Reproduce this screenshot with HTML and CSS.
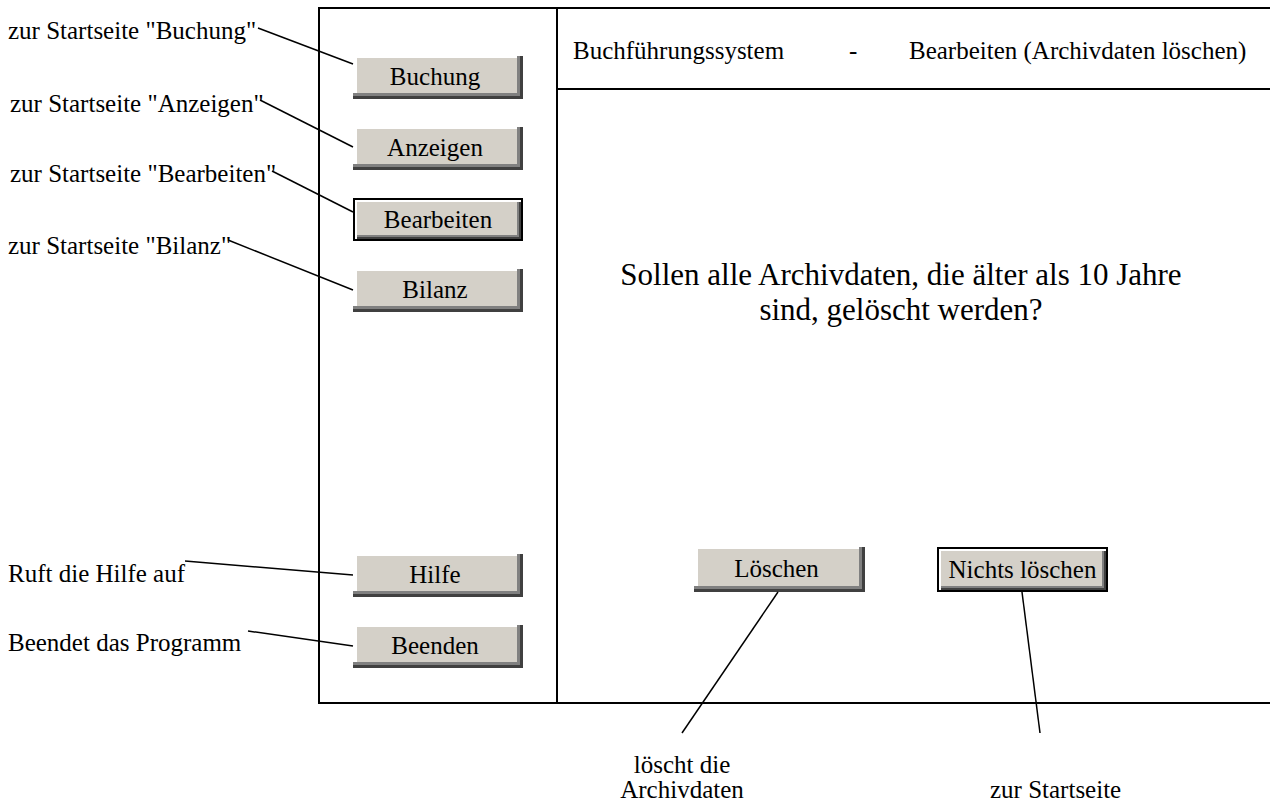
FILE: index.html
```html
<!DOCTYPE html>
<html lang="de">
<head>
	<meta charset="utf-8">
	<title>Buchführungssystem - Bearbeiten (Archivdaten löschen)</title>
	<link rel="stylesheet" href="styles.css">
</head>

<body>
	<div class="sheet">
		<div class="frame">
			<nav class="sidebar">
				<button class="btn">Buchung</button>
				<button class="btn">Anzeigen</button>
				<button class="btn btn-active">Bearbeiten</button>
				<button class="btn">Bilanz</button>
				<button class="btn push-down">Hilfe</button>
				<button class="btn">Beenden</button>
			</nav>

			<main class="panel">
				<header class="title-bar">
					<span class="title-app">Buchführungssystem</span>
					<span class="title-sep">-</span>
					<span class="title-page">Bearbeiten (Archivdaten löschen)</span>
				</header>

				<section class="content">
					<p class="question">Sollen alle Archivdaten, die älter als 10 Jahre<br>sind, gelöscht werden?</p>
					<div class="actions">
						<button class="btn btn-big">Löschen</button>
						<button class="btn btn-big btn-active">Nichts löschen</button>
					</div>
				</section>
			</main>
		</div>

		<!-- annotations -->
		<div class="note note-buchung">zur Startseite "Buchung"</div>
		<div class="note note-anzeigen">zur Startseite "Anzeigen"</div>
		<div class="note note-bearbeiten">zur Startseite "Bearbeiten"</div>
		<div class="note note-bilanz">zur Startseite "Bilanz"</div>
		<div class="note note-hilfe">Ruft die Hilfe auf</div>
		<div class="note note-beenden">Beendet das Programm</div>
		<div class="note note-loeschen">löscht die<br>Archivdaten</div>
		<div class="note note-start">zur Startseite</div>

		<svg class="connectors" width="1270" height="807" viewBox="0 0 1270 807">
			<line x1="258" y1="28" x2="353" y2="64"/>
			<line x1="260" y1="100" x2="353" y2="147"/>
			<line x1="272" y1="171" x2="353" y2="212"/>
			<line x1="228" y1="240" x2="353" y2="290"/>
			<line x1="185" y1="561" x2="353" y2="575"/>
			<line x1="248" y1="631" x2="353" y2="646"/>
			<line x1="778" y1="592" x2="682" y2="733"/>
			<line x1="1022" y1="592" x2="1040" y2="733"/>
		</svg>
	</div>
</body>

</html>
```

FILE: styles.css
```css
html {
	box-sizing: border-box;
}
*,
*::before,
*::after {
	box-sizing: inherit;
}

body {
	background-color: #fff;
	color: #000;
	font-family: "Liberation Serif", "Times New Roman", serif;
	margin: 0;
	padding: 0;
}

.sheet {
	height: 807px;
	overflow: hidden;
	position: relative;
	width: 1270px;
}

/* the drawn window */
.frame {
	border: 2px solid #000;
	border-right: none;
	display: flex;
	height: 697px;
	margin: 7px 0 0 318px;
	width: 952px;
}

.sidebar {
	display: flex;
	flex-direction: column;
	gap: 28px;
	padding: 47px 0 34px 33px;
	width: 236px;
}

.panel {
	border-left: 2px solid #000;
	display: flex;
	flex: 1;
	flex-direction: column;
}

.title-bar {
	align-items: center;
	border-bottom: 2px solid #000;
	display: flex;
	font-size: 25px;
	height: 81px;
	padding: 4px 0 0 15px;
}

.title-app {
	width: 276px;
}

.title-sep {
	width: 60px;
}

.content {
	display: flex;
	flex: 1;
	flex-direction: column;
	padding-bottom: 110px;
}

.question {
	font-size: 31px;
	line-height: 35px;
	margin: 167px 26px 0 0;
	text-align: center;
}

.actions {
	display: flex;
	gap: 72px;
	margin-top: auto;
	padding-left: 136px;
}

/* buttons */
.btn {
	background-color: #d4d0c8;
	border: none;
	border-radius: 0;
	box-shadow: inset -3px -3px #404040, inset -6px -6px #808080, inset 4px 2px #fff;
	color: #000;
	font-family: inherit;
	font-size: 25px;
	height: 43px;
	margin: 0;
	padding: 0 6px 2px 0;
	white-space: nowrap;
	width: 170px;
}

.btn-active {
	border: 2px solid #000;
	box-shadow: inset 2px 2px #fff, inset -2px -2px #404040, inset -4px -4px #808080;
	padding: 0;
}

.btn-big {
	height: 45px;
	width: 171px;
}

.sidebar .push-down {
	margin-top: auto;
}

/* annotations */
.note {
	font-size: 25px;
	line-height: 29px;
	position: absolute;
	white-space: nowrap;
}

.note-buchung { left: 8px; top: 16px; }
.note-anzeigen { left: 10px; top: 89px; }
.note-bearbeiten { left: 10px; top: 159px; }
.note-bilanz { left: 8px; top: 231px; }
.note-hilfe { left: 8px; top: 559px; }
.note-beenden { left: 8px; top: 628px; }

.note-loeschen {
	left: 612px;
	line-height: 25px;
	text-align: center;
	top: 752px;
	width: 140px;
}

.note-start {
	left: 990px;
	line-height: 25px;
	top: 777px;
}

.connectors {
	left: 0;
	pointer-events: none;
	position: absolute;
	top: 0;
}

.connectors line {
	stroke: #000;
	stroke-width: 1.5;
}
```
